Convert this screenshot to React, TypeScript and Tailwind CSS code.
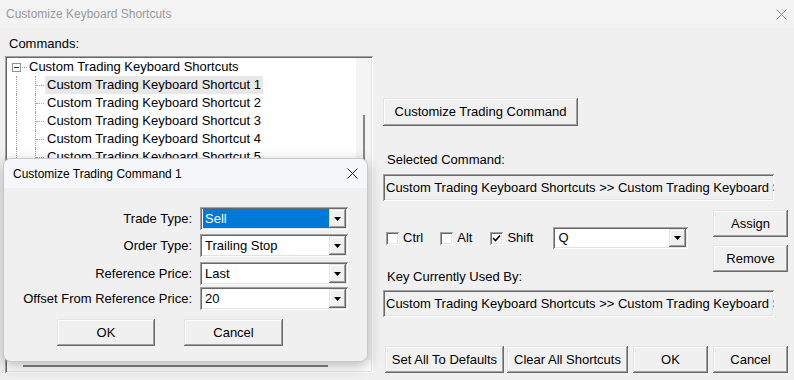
import React from "react";

const raised =
  "bg-[#f0f0f0] shadow-[inset_-1px_-1px_0_#696969,inset_1px_1px_0_#e3e3e3,inset_-2px_-2px_0_#a0a0a0,inset_2px_2px_0_#ffffff]";
const sunken =
  "shadow-[inset_1px_1px_0_#a0a0a0,inset_-1px_-1px_0_#ffffff,inset_2px_2px_0_#696969,inset_-2px_-2px_0_#e3e3e3]";

function Button({ label, className = "" }: { label: string; className?: string }) {
  return (
    <div className={`${raised} flex h-[27px] items-center justify-center text-[13px] text-black ${className}`}>
      {label}
    </div>
  );
}

function DropButton() {
  return (
    <div className={`${raised} flex h-full w-[17px] shrink-0 items-center justify-center`}>
      <svg width="7" height="4" viewBox="0 0 7 4">
        <path d="M0 0h7L3.5 4z" fill="#000" />
      </svg>
    </div>
  );
}

function Combo({ value, selected = false, className = "" }: { value: string; selected?: boolean; className?: string }) {
  return (
    <div className={`${sunken} flex bg-white p-[2px] ${className}`}>
      <div className="flex min-w-0 flex-1 items-center pl-[1px]">
        <span
          className={`flex h-full w-full items-center pl-[2px] text-[13px] ${
            selected ? "bg-[#0078d7] text-white" : "text-black"
          }`}
        >
          {value}
        </span>
      </div>
      <DropButton />
    </div>
  );
}

function Check({ label, checked = false }: { label: string; checked?: boolean }) {
  return (
    <div className="flex items-center">
      <div className={`${sunken} flex h-[13px] w-[13px] items-center justify-center bg-white`}>
        {checked && (
          <svg width="9" height="9" viewBox="0 0 9 9">
            <path d="M1 4l2.5 2.5L8 1.5" stroke="#000" strokeWidth="1.6" fill="none" />
          </svg>
        )}
      </div>
      <span className="ml-[4px] text-[13px] text-black">{label}</span>
    </div>
  );
}

const children = Array.from({ length: 5 }, (_, i) => `Custom Trading Keyboard Shortcut ${i + 1}`);

function CommandTree() {
  return (
    <div className={`${sunken} flex h-[317px] w-[368px] flex-col bg-white p-[2px]`}>
      <div className="flex min-h-0 flex-1">
        <div className="flex min-w-0 flex-1 flex-col overflow-hidden">
          <div className="flex h-[18px] items-center pl-[5px]">
            <div className="flex h-[9px] w-[9px] items-center justify-center border border-[#919191] bg-white">
              <div className="h-px w-[5px] bg-[#333]" />
            </div>
            <div className="ml-px w-[5px] border-t border-dotted border-[#a0a0a0]" />
            <span className="ml-[2px] whitespace-nowrap text-[13px] text-black">Custom Trading Keyboard Shortcuts</span>
          </div>
          {children.map((name, i) => (
            <div key={name} className="flex h-[18px] items-stretch pl-[9px]">
              <div className="w-[19px] border-l border-dotted border-[#a0a0a0]" />
              <div className="flex w-[10px] items-center border-l border-dotted border-[#a0a0a0]">
                <div className="w-[8px] border-t border-dotted border-[#a0a0a0]" />
              </div>
              <span
                className={`flex items-center whitespace-nowrap px-[2px] text-[13px] text-black ${
                  i === 0 ? "bg-[#e8e8e8]" : ""
                }`}
              >
                {name}
              </span>
            </div>
          ))}
          <div className="flex flex-1 pl-[9px]">
            <div className="w-[19px] border-l border-dotted border-[#a0a0a0]" />
            <div className="border-l border-dotted border-[#a0a0a0]" />
          </div>
        </div>
        <div className="flex w-[15px] shrink-0 justify-center bg-[#f4f4f4] pt-[57px]">
          <div className="h-full w-[2px] bg-[#858585]" />
        </div>
      </div>
      <div className="flex h-[11px] shrink-0 items-center pl-[16px]">
        <div className="h-[2px] w-[305px] bg-[#858585]" />
      </div>
    </div>
  );
}

function TradingCommandDialog() {
  const rows: { label: string; value: string; selected?: boolean; mt: string }[] = [
    { label: "Trade Type:", value: "Sell", selected: true, mt: "mt-[19px]" },
    { label: "Order Type:", value: "Trailing Stop", mt: "mt-[4px]" },
    { label: "Reference Price:", value: "Last", mt: "mt-[5px]" },
    { label: "Offset From Reference Price:", value: "20", mt: "mt-[2px]" },
  ];
  return (
    <div className="absolute left-[3px] top-[158px] flex h-[204px] w-[365px] flex-col overflow-hidden rounded-[8px] border border-[#c8c8c8] bg-[#f0f0f0] shadow-[0_4px_14px_rgba(0,0,0,0.28)]">
      <div className="flex h-[29px] shrink-0 items-center justify-between bg-[#f5f7fb] pl-[9px] pr-[9px]">
        <span className="text-[12px] text-black">Customize Trading Command 1</span>
        <svg width="11" height="11" viewBox="0 0 11 11">
          <path d="M0.5 0.5l10 10M10.5 0.5l-10 10" stroke="#222" strokeWidth="1" />
        </svg>
      </div>
      {rows.map((r) => (
        <div key={r.label} className={`flex h-[23px] items-center ${r.mt}`}>
          <span className="w-[188px] text-right text-[13px] leading-[16px] text-black">{r.label}</span>
          <Combo value={r.value} selected={r.selected} className="ml-[8px] h-[23px] w-[148px]" />
        </div>
      ))}
      <div className="mt-[9px] flex pl-[53px]">
        <Button label="OK" className="w-[98px]" />
        <Button label="Cancel" className="ml-[29px] w-[99px]" />
      </div>
    </div>
  );
}

export default function App() {
  return (
    <div className="relative h-[380px] w-[794px] overflow-hidden bg-[#f0f0f0] font-['Liberation_Sans',Arial,sans-serif]">
      <div className="flex h-[28px] items-center justify-between bg-[#f3f3f3] pl-[6px] pr-[7px]">
        <span className="text-[12px] text-[#9a9a9a]">Customize Keyboard Shortcuts</span>
        <svg width="11" height="11" viewBox="0 0 11 11">
          <path d="M0.5 0.5l10 10M10.5 0.5l-10 10" stroke="#8a8a8a" strokeWidth="1" />
        </svg>
      </div>

      <div className="flex pl-[5px]">
        <div className="flex flex-col">
          <span className="ml-[4px] mt-[8px] h-[16px] text-[13px] leading-[16px] text-black">Commands:</span>
          <div className="mt-[4px]">
            <CommandTree />
          </div>
        </div>

        <div className="ml-[10px] flex w-[405px] flex-col pt-[70px]">
          <Button label="Customize Trading Command" className="h-[28px] w-[195px]" />
          <span className="ml-[4px] mt-[26px] h-[16px] text-[13px] leading-[16px] text-black">Selected Command:</span>
          <div className={`${sunken} mt-[6px] flex h-[27px] w-[391px] items-center overflow-hidden whitespace-nowrap px-[3px] text-[13px] text-black`}>
            Custom Trading Keyboard Shortcuts &gt;&gt; Custom Trading Keyboard Shortcut 1
          </div>

          <div className="mt-[9px] flex">
            <div className="flex w-[330px] flex-col">
              <div className="mt-[17px] flex h-[22px] items-center pl-[3px]">
                <Check label="Ctrl" />
                <div className="ml-[17px]">
                  <Check label="Alt" />
                </div>
                <div className="ml-[18px]">
                  <Check label="Shift" checked />
                </div>
                <Combo value="Q" className="ml-[20px] h-[22px] w-[135px]" />
              </div>
              <span className="ml-[4px] mt-[20px] h-[16px] text-[13px] leading-[16px] text-black">Key Currently Used By:</span>
            </div>
            <div className="flex flex-col">
              <Button label="Assign" className="w-[75px]" />
              <Button label="Remove" className="mt-[8px] w-[75px]" />
            </div>
          </div>

          <div className={`${sunken} mt-[5px] flex h-[27px] w-[391px] items-center overflow-hidden whitespace-nowrap px-[3px] text-[13px] text-black`}>
            Custom Trading Keyboard Shortcuts &gt;&gt; Custom Trading Keyboard Shortcut 1
          </div>

          <div className="ml-[2px] mt-[29px] flex">
            <Button label="Set All To Defaults" className="w-[119px]" />
            <Button label="Clear All Shortcuts" className="ml-[3px] w-[121px]" />
            <Button label="OK" className="ml-[5px] w-[75px]" />
            <Button label="Cancel" className="ml-[5px] w-[75px]" />
          </div>
        </div>
      </div>

      <TradingCommandDialog />
    </div>
  );
}
